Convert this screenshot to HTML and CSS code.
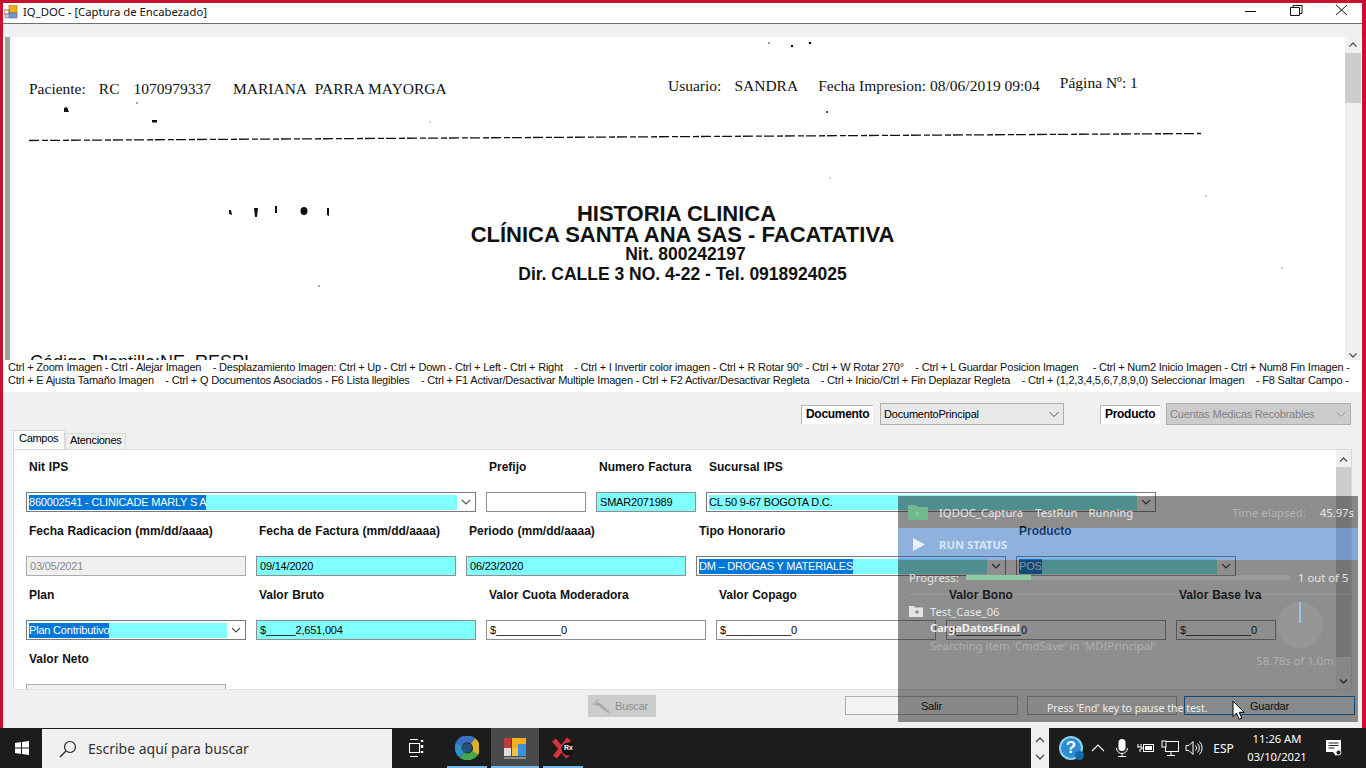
FILE: index.html
```html
<!DOCTYPE html>
<html lang="es">
<head>
    <meta charset="UTF-8">
    <meta name="viewport" content="width=device-width, initial-scale=1.0">
    <title>IQ_DOC - Captura de Encabezado</title>
    <link rel="stylesheet" href="styles.css">
</head>
<body>

    <div class="window">
        <div class="titlebar">
            <svg class="app-icon" width="14" height="14" viewBox="0 0 14 14">
                <rect x="5" y="0" width="8" height="8" fill="#e8b020" stroke="#a87810" stroke-width="0.6"/>
                <rect x="0" y="5" width="5" height="4" fill="#f4f4f4" stroke="#a04030" stroke-width="0.8"/>
                <rect x="5" y="8" width="8" height="5" fill="#6d9ad8" stroke="#4a6a9a" stroke-width="0.6"/>
                <rect x="1" y="9" width="4" height="4" fill="#c8c8d8" stroke="#7a7a8a" stroke-width="0.6"/>
            </svg>
            <span class="title-text">IQ_DOC - [Captura de Encabezado]</span>
            <div class="title-buttons">
                <svg width="44" height="20" viewBox="0 0 44 20"><path d="M14 11.500h11" stroke="#111" stroke-width="1"/></svg>
                <svg width="44" height="20" viewBox="0 0 44 20"><path d="M15.500 7.500h9v8h-9zM18 7V5.500h9v8h-2.500" fill="none" stroke="#111" stroke-width="1"/></svg>
                <svg width="44" height="20" viewBox="0 0 44 20"><path d="M17 5l11 10M28 5L17 15" stroke="#111" stroke-width="1"/></svg>
            </div>
        </div>
        <div class="strip"></div>

        <div class="viewer">
            <div class="left-bar"></div>
            <div class="scan">
                <svg class="specks" width="1335" height="323" viewBox="10 37 1335 323">
                    <g fill="#111">
                        <circle cx="769" cy="43" r="0.8"/><circle cx="792" cy="46" r="1.2"/><circle cx="810" cy="43" r="1.3"/>
                        <path d="M64 108l3-1 2 5-5 0z"/><circle cx="137" cy="103" r="0.7"/><rect x="152" y="120" width="5" height="2.5"/>
                        <circle cx="827" cy="112" r="1"/><circle cx="430" cy="122" r="0.5"/>
                        <path d="M229 210l2 0 1 5-3-1z"/><path d="M254 208l4 0-1 9-2 0z"/><path d="M275 206l2 0 0 7-2 0z"/>
                        <ellipse cx="304" cy="211" rx="3.5" ry="4"/><path d="M327 208l2 0 0 8-2-1z"/>
                        <circle cx="319" cy="286" r="0.7"/><circle cx="1206" cy="196" r="0.5"/><circle cx="1282" cy="268" r="0.5"/>
                        <circle cx="830" cy="178" r="0.5"/>
                    </g>
                </svg>
                <div class="scan-head">
                    <div class="scan-left">
                        <span>Paciente:</span><span class="sp-b">RC</span><span class="sp-c">1070979337</span><span class="sp-d">MARIANA&nbsp; PARRA MAYORGA</span>
                    </div>
                    <div class="scan-right">
                        <span>Usuario:</span><span class="sp-f">SANDRA</span><span class="sp-g">Fecha Impresion: 08/06/2019 09:04</span><span class="sp-h">Página Nº: 1</span>
                    </div>
                </div>
                <svg class="dash-line" width="1175" height="10" viewBox="0 0 1175 10">
                    <path d="M0 8.500L1172 1.500" stroke="#111" stroke-width="1.300" stroke-dasharray="10 3 6 2"/>
                </svg>
                <div class="scan-title">
                    <div class="t-big t-first">HISTORIA CLINICA</div>
                    <div class="t-big">CLÍNICA SANTA ANA SAS - FACATATIVA</div>
                    <div class="t-small t-nit">Nit. 800242197</div>
                    <div class="t-small t-last">Dir. CALLE 3 NO. 4-22 - Tel. 0918924025</div>
                </div>
                <div class="scan-code">Código Plantilla:NE_RESPI</div>
            </div>
            <div class="scroll-v">
                <svg class="chev" width="16" height="16" viewBox="0 0 16 16"><path d="M4.500 9.500L8 6l3.500 3.500" fill="none" stroke="#555" stroke-width="1.400"/></svg>
                <div class="thumb thumb-top"></div>
                <svg class="chev chev-end" width="16" height="16" viewBox="0 0 16 16"><path d="M4.500 6.500L8 10l3.500-3.500" fill="none" stroke="#555" stroke-width="1.400"/></svg>
            </div>
        </div>

        <div class="hints">
            <div class="hint-line">Ctrl + Zoom Imagen - Ctrl - Alejar Imagen    - Desplazamiento Imagen: Ctrl + Up - Ctrl + Down - Ctrl + Left - Ctrl + Right    - Ctrl + I Invertir color imagen - Ctrl + R Rotar 90° - Ctrl + W Rotar 270°    - Ctrl + L Guardar Posicion Imagen     - Ctrl + Num2 Inicio Imagen - Ctrl + Num8 Fin Imagen -</div>
            <div class="hint-line">Ctrl + E Ajusta Tamaño Imagen    - Ctrl + Q Documentos Asociados - F6 Lista llegibles    - Ctrl + F1 Activar/Desactivar Multiple Imagen - Ctrl + F2 Activar/Desactivar Regleta    - Ctrl + Inicio/Ctrl + Fin Deplazar Regleta    - Ctrl + (1,2,3,4,5,6,7,8,9,0) Seleccionar Imagen    - F8 Saltar Campo -</div>
        </div>

        <div class="panel">
            <div class="selectors">
                <div class="sel-label sel-doc">Documento</div>
                <div class="sel-box sel-box-doc">
                    <span>DocumentoPrincipal</span>
                    <svg width="12" height="12" viewBox="0 0 12 12"><path d="M1.500 4L6 8.500 10.500 4" fill="none" stroke="#555"/></svg>
                </div>
                <div class="sel-label sel-prod">Producto</div>
                <div class="sel-box sel-box-prod">
                    <span>Cuentas Medicas Recobrables</span>
                    <svg width="12" height="12" viewBox="0 0 12 12"><path d="M1.500 4L6 8.500 10.500 4" fill="none" stroke="#999"/></svg>
                </div>
            </div>

            <div class="tabs">
                <div class="tab tab-active">Campos</div>
                <div class="tab">Atenciones</div>
            </div>

            <div class="tab-panel">
                <div class="form">
                    <div class="row">
                        <div class="field w450">
                            <label>Nit IPS</label>
                            <div class="combo"><div class="combo-fill"><span class="sel-text">860002541 - CLINICADE MARLY S A</span></div>
                                <svg width="18" height="18" viewBox="0 0 18 18"><path d="M5 7l4 4 4-4" fill="none" stroke="#555" stroke-width="1.200"/></svg></div>
                        </div>
                        <div class="field w100">
                            <label>Prefijo</label>
                            <div class="input input-plain"></div>
                        </div>
                        <div class="field w100">
                            <label>Numero Factura</label>
                            <div class="input input-req">SMAR2071989</div>
                        </div>
                        <div class="field w450">
                            <label>Sucursal IPS</label>
                            <div class="combo"><div class="combo-fill">CL 50 9-67 BOGOTA D.C.</div>
                                <svg width="18" height="18" viewBox="0 0 18 18"><path d="M5 7l4 4 4-4" fill="none" stroke="#333" stroke-width="1.200"/></svg></div>
                        </div>
                    </div>
                    <div class="row">
                        <div class="field w220">
                            <label>Fecha Radicacion (mm/dd/aaaa)</label>
                            <div class="input input-off">03/05/2021</div>
                        </div>
                        <div class="field w200">
                            <label>Fecha de Factura (mm/dd/aaaa)</label>
                            <div class="input input-req">09/14/2020</div>
                        </div>
                        <div class="field w220">
                            <label>Periodo (mm/dd/aaaa)</label>
                            <div class="input input-req">06/23/2020</div>
                        </div>
                        <div class="field w310">
                            <label>Tipo Honorario</label>
                            <div class="combo"><div class="combo-fill"><span class="sel-text">DM – DROGAS Y MATERIALES</span></div>
                                <svg width="18" height="18" viewBox="0 0 18 18"><path d="M5 7l4 4 4-4" fill="none" stroke="#333" stroke-width="1.200"/></svg></div>
                        </div>
                        <div class="field w220">
                            <label>Producto</label>
                            <div class="combo"><div class="combo-fill"><span class="sel-text">POS</span></div>
                                <svg width="18" height="18" viewBox="0 0 18 18"><path d="M5 7l4 4 4-4" fill="none" stroke="#333" stroke-width="1.200"/></svg></div>
                        </div>
                    </div>
                    <div class="row">
                        <div class="field w220">
                            <label>Plan</label>
                            <div class="combo"><div class="combo-fill"><span class="sel-text">Plan Contributivo</span></div>
                                <svg width="18" height="18" viewBox="0 0 18 18"><path d="M5 7l4 4 4-4" fill="none" stroke="#555" stroke-width="1.200"/></svg></div>
                        </div>
                        <div class="field w220">
                            <label>Valor Bruto</label>
                            <div class="input input-req">$_____2,651,004</div>
                        </div>
                        <div class="field w220">
                            <label>Valor Cuota Moderadora</label>
                            <div class="input input-plain">$___________0</div>
                        </div>
                        <div class="field w220">
                            <label>Valor Copago</label>
                            <div class="input input-plain">$___________0</div>
                        </div>
                        <div class="field w220">
                            <label>Valor Bono</label>
                            <div class="input input-plain">$___________0</div>
                        </div>
                        <div class="field w100">
                            <label>Valor Base Iva</label>
                            <div class="input input-plain">$___________0</div>
                        </div>
                    </div>
                    <div class="row">
                        <div class="field w200">
                            <label>Valor Neto</label>
                            <div class="input input-off"></div>
                        </div>
                    </div>
                </div>
                <div class="scroll-form">
                    <svg class="chev" width="15" height="15" viewBox="0 0 15 15"><path d="M4 9.500L7.500 6 11 9.500" fill="none" stroke="#555" stroke-width="1.400"/></svg>
                    <div class="thumb thumb-form"></div>
                    <svg class="chev chev-end" width="15" height="16" viewBox="0 0 15 16"><path d="M4 6.500L7.500 10 11 6.500" fill="none" stroke="#333" stroke-width="1.400"/></svg>
                </div>
            </div>

            <div class="footer">
                <div class="btn btn-search">
                    <svg width="24" height="18" viewBox="0 0 24 18"><path d="M4 3l6 4 9 8-2 1-9-7-4-1z" fill="#a8a8a8"/><path d="M2 8l6-6" stroke="#b8b8b8" stroke-width="2"/></svg>
                    <span>Buscar</span>
                </div>
                <div class="btn btn-exit">Salir</div>
                <div class="btn btn-mid"></div>
                <div class="btn btn-save">Guardar</div>
            </div>
        </div>
    </div>

    <div class="taskbar">
        <div class="start">
            <svg width="14" height="14" viewBox="0 0 14 14"><path d="M0 2l6-.9V6.500H0zM7 1l7-1v6.500H7zM0 7.500h6v5.400L0 12zM7 7.500h7V14l-7-1z" fill="#fff"/></svg>
        </div>
        <div class="search">
            <svg width="20" height="20" viewBox="0 0 20 20"><circle cx="12" cy="8" r="5.500" fill="none" stroke="#222" stroke-width="1.200"/><path d="M8 12l-6 6" stroke="#222" stroke-width="1.300"/></svg>
            <span>Escribe aquí para buscar</span>
        </div>
        <div class="task-cell task-view">
            <svg width="17" height="18" viewBox="0 0 17 18" fill="none" stroke="#fff"><path d="M2 .5h8M2 17.500h8" /><rect x="1.500" y="4.500" width="10" height="9"/><path d="M14 1v2M14 6v3M14 12v2" stroke-width="2.500"/></svg>
        </div>
        <div class="task-cell app-open">
            <svg width="24" height="24" viewBox="0 0 24 24" fill="none" stroke-width="7">
                <circle cx="12" cy="12" r="5" fill="#27527a" stroke="none"/>
                <path d="M4 8a9 9 0 0 1 14-3" stroke="#3a6fc4"/><path d="M18 5a9 9 0 0 1 2 12" stroke="#d8b428"/><path d="M20 17a9 9 0 0 1-13 2" stroke="#43a84c"/><path d="M7 19a9 9 0 0 1-3-11" stroke="#2a8fc8"/>
            </svg>
        </div>
        <div class="task-cell app-open app-active">
            <svg width="24" height="24" viewBox="0 0 24 24">
                <rect x="1" y="2" width="7" height="10" fill="#c03a3a"/><rect x="1" y="12" width="7" height="8" fill="#ddd"/><rect x="9" y="2" width="14" height="10" fill="#f0b020"/><rect x="15" y="8" width="8" height="12" fill="#3f8fe0"/><rect x="9" y="12" width="6" height="8" fill="#f3c040"/><path d="M1 22h22" stroke="#ccc"/>
            </svg>
        </div>
        <div class="task-cell app-open">
            <svg width="26" height="24" viewBox="0 0 26 24"><path d="M4 4l14 17M19 3L5 21" stroke="#d8323a" stroke-width="5"/><circle cx="18" cy="13" r="6.500" fill="#111"/></svg>
            <span class="rx">Rx</span>
        </div>
        <div class="task-spacer"></div>
        <div class="bar-scroll">
            <svg width="12" height="9" viewBox="0 0 12 9"><path d="M2 6l4-4 4 4" fill="none" stroke="#444" stroke-width="1.300"/></svg>
            <svg width="12" height="9" viewBox="0 0 12 9"><path d="M2 3l4 4 4-4" fill="none" stroke="#444" stroke-width="1.300"/></svg>
        </div>
        <div class="tray">
            <div class="tray-help"><span class="help-mark">?</span><span class="help-badge"></span></div>
            <div class="tray-cell"><svg width="14" height="8" viewBox="0 0 14 8"><path d="M1 7l6-6 6 6" fill="none" stroke="#fff" stroke-width="1.100"/></svg></div>
            <div class="tray-cell"><svg width="14" height="20" viewBox="0 0 14 20"><rect x="3.500" y="1" width="7" height="12" rx="3.500" fill="#fff"/><path d="M1.500 10a5.500 5.500 0 0 0 11 0M7 15.500V18M3 18.500h8" fill="none" stroke="#fff"/></svg></div>
            <div class="tray-cell"><svg width="18" height="14" viewBox="0 0 18 14" fill="none" stroke="#fff"><path d="M1 3v3M4 3v3M0 6h5v2H3v3" /><rect x="6.500" y="3.500" width="10" height="7"/><rect x="8" y="5" width="7" height="4" fill="#fff" stroke="none"/></svg></div>
            <div class="tray-cell"><svg width="18" height="17" viewBox="0 0 18 17" fill="none" stroke="#fff"><rect x="4.500" y="1.500" width="13" height="10"/><path d="M10 12v3M6 15.500h8"/><rect x="1" y="1" width="4" height="6" fill="#1c1c1c"/></svg></div>
            <div class="tray-cell"><svg width="18" height="16" viewBox="0 0 18 16" fill="none" stroke="#fff"><path d="M1 5.500h3l4-4v13l-4-4H1z"/><path d="M10.500 5.500a3.500 3.500 0 0 1 0 5M12.500 3.500a6.500 6.500 0 0 1 0 9M14.500 1.500a9.500 9.500 0 0 1 0 13"/></svg></div>
            <div class="tray-lang">ESP</div>
            <div class="tray-clock"><div>11:26 AM</div><div>03/10/2021</div></div>
            <div class="tray-note"><svg width="17" height="18" viewBox="0 0 17 18"><path d="M1 1h15v10l-3 3-2 3-3-4H1z" fill="#fff"/><path d="M3.500 4h10M3.500 6.500h10M3.500 9h6" stroke="#1c1c1c"/><circle cx="13.500" cy="13.500" r="2.500" fill="#1c1c1c" stroke="#fff"/></svg></div>
        </div>
    </div>

    <!-- panel de la herramienta de pruebas, queda encima del formulario -->
    <div class="runner">
        <div class="runner-head">
            <svg width="20" height="16" viewBox="0 0 20 16"><path d="M0 1h8l2 2h10v13H0z" fill="#6fb98c"/><path d="M8 7l4 2.500L8 12z" fill="#8ccba4"/></svg>
            <span class="rh-a">IQDOC_Captura</span><span class="rh-b">TestRun</span><span class="rh-c">Running</span>
            <span class="rh-time">Time elapsed:</span><span class="rh-val">45.97s</span>
        </div>
        <div class="runner-band">
            <svg width="12" height="13" viewBox="0 0 12 13"><path d="M0 0l12 6.500L0 13z" fill="#e8f0fa"/></svg>
            <span>RUN STATUS</span>
        </div>
        <div class="runner-body">
            <div class="progress">
                <span class="progress-label">Progress:</span>
                <div class="progress-track"><div class="progress-fill"></div></div>
                <span class="progress-count">1 out of 5</span>
            </div>
            <div class="runner-info">
                <div class="info-left">
                    <div class="case-line">
                        <svg width="14" height="12" viewBox="0 0 14 12"><path d="M0 1h5l1 1.500h8V12H0z" fill="#e4e4e4"/><circle cx="8" cy="7" r="1.800" fill="#8a8a8a"/></svg>
                        <span>Test_Case_06</span>
                    </div>
                    <div class="step-name">CargaDatosFinal</div>
                    <div class="step-detail">Searching item 'CmdSave' in 'MDIPrincipal'</div>
                </div>
                <div class="info-right">
                    <div class="dial"><div class="dial-tick"></div></div>
                    <div class="dial-text">58.78s of 1.0m</div>
                </div>
            </div>
        </div>
        <div class="runner-foot">Press 'End' key to pause the test.</div>
    </div>

    <svg class="pointer" width="14" height="21" viewBox="0 0 14 21"><path d="M1 1v15.500l3.600-3.300 2.600 6 2.600-1.100-2.600-5.800h5z" fill="#fff" stroke="#000"/></svg>

</body>
</html>
```

FILE: styles.css
```css
* {
    box-sizing: border-box;
}

body {
    margin: 0;
    height: 768px;
    width: 1366px;
    overflow: hidden;
    position: relative;
    display: flex;
    flex-direction: column;
    background-color: #c8102e;
    font-family: "Liberation Sans", Arial, sans-serif;
    font-size: 11px;
    letter-spacing: -0.2px;
    color: #000;
}

.window {
    height: 725px;
    margin: 3px 4px 0 3px;
    display: flex;
    flex-direction: column;
    background-color: #f0f0f0;
}

/* barra de titulo */
.titlebar {
    height: 21px;
    flex-shrink: 0;
    display: flex;
    align-items: center;
    background-color: #fff;
    border-bottom: 1px solid #6e6e6e;
    padding: 0 0 3px 1px;
}

.title-text {
    margin-left: 5px;
    font-family: "Noto Sans", sans-serif;
    font-size: 11.300px;
    letter-spacing: 0;
    color: #111;
}

.title-buttons {
    align-self: flex-start;
    margin: -3px -1px 0 auto;
    display: flex;
}

.strip {
    height: 13px;
    flex-shrink: 0;
    background-color: #f0f0f0;
}

/* imagen escaneada */
.viewer {
    height: 323px;
    flex-shrink: 0;
    display: flex;
    background-color: #fff;
    padding-left: 2px;
}

.left-bar {
    width: 5px;
    background-color: #9aa59c;
}

.scan {
    position: relative;
    width: 1335px;
    overflow: hidden;
    background-color: #fff;
}

.specks {
    position: absolute;
    top: 0;
    left: 0;
}

.scan-head {
    display: flex;
    padding: 36px 0 0 19px;
    font-family: "Liberation Serif", serif;
    font-size: 15.500px;
    letter-spacing: 0;
    color: #111;
    height: 62px;
}

.scan-left {
    width: 639px;
    padding-top: 7px;
    white-space: nowrap;
}

.scan-right {
    white-space: nowrap;
    padding-top: 4px;
}

.sp-b { margin-left: 13px; }
.sp-c { margin-left: 14px; }
.sp-d { margin-left: 22px; }
.sp-f { margin-left: 13px; }
.sp-g { margin-left: 20px; }
.sp-h { margin-left: 20px; position: relative; top: -3px; }

.dash-line {
    display: block;
    margin: 33px 0 0 19px;
}

.scan-title {
    margin-top: 61px;
    padding-left: 10px;
    text-align: center;
    font-weight: bold;
    letter-spacing: 0;
    color: #111;
}

.t-big {
    font-size: 22px;
    line-height: 21px;
}

.t-first {
    padding-right: 12px;
}

.t-small {
    font-size: 17.500px;
    line-height: 19px;
}

.t-nit {
    padding-left: 6px;
}

.t-last {
    margin-top: 1px;
}

.scan-code {
    position: absolute;
    top: 315px;
    left: 20px;
    font-size: 18px;
    letter-spacing: 0;
    color: #111;
}

.scroll-v {
    width: 16px;
    display: flex;
    flex-direction: column;
    background-color: #f0f0f0;
}

.chev {
    display: block;
    flex-shrink: 0;
}

.chev-end {
    margin-top: auto;
}

.scroll-v .chev-end {
    margin-bottom: -3px;
}

.thumb {
    background-color: #cdcdcd;
}

.thumb-top {
    height: 50px;
}

.hints {
    height: 32px;
    flex-shrink: 0;
    padding: 1px 0 0 5px;
    background-color: #fff;
    font-size: 11px;
    letter-spacing: -0.2px;
    line-height: 13px;
    color: #111;
}

.hint-line {
    white-space: pre;
}

/* panel inferior */
.panel {
    flex: 1;
    display: flex;
    flex-direction: column;
    min-height: 0;
}

.selectors {
    display: flex;
    justify-content: flex-end;
    align-items: center;
    height: 22px;
    margin-top: 11px;
    padding-right: 11px;
    flex-shrink: 0;
}

.sel-label {
    height: 19px;
    line-height: 17px;
    padding-left: 4px;
    font-size: 12px;
    font-weight: bold;
    letter-spacing: -0.3px;
    background-color: #fff;
    border-top: 1px solid #b5b5b5;
    border-left: 1px solid #b5b5b5;
}

.sel-doc {
    width: 72px;
    margin-right: 7px;
}

.sel-prod {
    width: 60px;
    margin-right: 6px;
    margin-left: 36px;
}

.sel-box {
    height: 22px;
    display: flex;
    align-items: center;
    justify-content: space-between;
    padding: 0 3px;
    border: 1px solid #adadad;
    background-color: #e8e8e8;
}

.sel-box-doc {
    width: 184px;
}

.sel-box-prod {
    width: 185px;
    background-color: #ccc;
    color: #838383;
}

.tabs {
    display: flex;
    align-items: flex-end;
    height: 19px;
    margin: 5px 0 0 10px;
    flex-shrink: 0;
}

.tab {
    height: 16px;
    line-height: 13px;
    padding: 0 4px;
    border: 1px solid #d9d9d9;
    border-bottom: none;
    background-color: #f0f0f0;
    letter-spacing: -0.3px;
}

.tab-active {
    height: 19px;
    width: 52px;
    line-height: 15px;
    padding-left: 5px;
    background-color: #fff;
}

.tab-panel {
    height: 241px;
    margin: 0 10px;
    display: flex;
    flex-shrink: 0;
    background-color: #fff;
    border: 1px solid #d9d9d9;
    border-bottom: 1px solid #e3e3e3;
}

.form {
    flex: 1;
    min-width: 0;
    overflow: hidden;
    padding: 10px 0 0 12px;
}

.row {
    display: flex;
    gap: 10px;
    margin-bottom: 12px;
}

.field {
    flex-shrink: 0;
}

.field label {
    display: block;
    height: 14px;
    line-height: 14px;
    margin-bottom: 18px;
    padding-left: 3px;
    font-size: 12px;
    font-weight: bold;
    letter-spacing: 0;
    word-spacing: 0.5px;
    white-space: nowrap;
    color: #111;
}

.w100 { width: 100px; }
.w200 { width: 200px; }
.w220 { width: 220px; }
.w310 { width: 310px; }
.w450 { width: 450px; }

.input {
    height: 20px;
    line-height: 18px;
    padding-left: 3px;
    border: 1px solid #8f8f8f;
    white-space: nowrap;
    overflow: hidden;
}

.input-plain {
    background-color: #fff;
}

.input-req {
    background-color: #80ffff;
}

.input-off {
    background-color: #f0f0f0;
    color: #8a8a8a;
    border-color: #ababab;
}

.combo {
    height: 20px;
    display: flex;
    align-items: center;
    padding-left: 2px;
    border: 1px solid #7a7a7a;
    background-color: #fff;
}

.combo-fill {
    flex: 1;
    min-width: 0;
    height: 15px;
    line-height: 15px;
    background-color: #80ffff;
    white-space: nowrap;
    overflow: hidden;
}

.combo svg {
    flex-shrink: 0;
}

.sel-text {
    display: inline-block;
    background-color: #0078d7;
    color: #fff;
}

.scroll-form {
    width: 15px;
    display: flex;
    flex-direction: column;
    flex-shrink: 0;
    background-color: #f0f0f0;
    padding-top: 2px;
}

.thumb-form {
    height: 190px;
}

.footer {
    display: flex;
    align-items: flex-start;
    padding: 5px 0 0 585px;
    flex: 1;
}

.btn {
    height: 19px;
    margin-top: 1px;
    text-align: center;
    line-height: 18px;
    border: 1px solid #adadad;
    background-color: #f3f3f3;
}

.btn-search {
    width: 68px;
    height: 22px;
    margin-top: 0;
    display: flex;
    align-items: center;
    padding-left: 2px;
    background-color: #ccc;
    border-color: #ccc;
    color: #8c8c8c;
}

.btn-exit {
    width: 173px;
    margin-left: 189px;
}

.btn-mid {
    width: 150px;
    margin-left: 9px;
}

.btn-save {
    width: 171px;
    margin-left: 7px;
    border-color: #0078d7;
    background-color: #eef6fc;
}

/* barra de tareas */
.taskbar {
    height: 40px;
    flex-shrink: 0;
    display: flex;
    align-items: center;
    background-color: #1c1c1c;
    color: #fff;
    letter-spacing: 0;
}

.start {
    width: 42px;
    height: 40px;
    display: flex;
    align-items: center;
    padding-left: 15px;
}

.search {
    width: 350px;
    height: 39px;
    margin-top: 1px;
    display: flex;
    align-items: center;
    padding-left: 16px;
    background-color: #f0f0f0;
    font-family: "Noto Sans", sans-serif;
    font-size: 14px;
    color: #333;
}

.search span {
    margin-left: 10px;
}

.task-cell {
    position: relative;
    width: 48px;
    height: 40px;
    display: flex;
    align-items: center;
    justify-content: center;
}

.task-view {
    width: 51px;
    padding-right: 3px;
}

.app-open::after {
    content: "";
    position: absolute;
    left: 4px;
    right: 4px;
    bottom: 0;
    height: 2px;
    background-color: #76b9ed;
}

.app-active {
    background-color: #4a4a4a;
}

.app-active::after {
    left: 0;
    right: 0;
}

.rx {
    position: absolute;
    left: 25px;
    top: 16px;
    font-size: 7px;
    font-weight: bold;
}

.task-spacer {
    flex: 1;
}

.bar-scroll {
    width: 18px;
    height: 40px;
    margin-right: 10px;
    display: flex;
    flex-direction: column;
    align-items: center;
    justify-content: center;
    gap: 7px;
    background-color: #f0f0f0;
}

.tray {
    display: flex;
    align-items: center;
    height: 40px;
}

.tray-help {
    position: relative;
    width: 24px;
    height: 24px;
    margin-right: 3px;
    border-radius: 50%;
    background-color: #2a8fd0;
    border: 2px solid #8fd0ef;
    text-align: center;
}

.help-mark {
    font-size: 17px;
    font-weight: bold;
    line-height: 20px;
    color: #fff;
}

.help-badge {
    position: absolute;
    right: -3px;
    bottom: -2px;
    width: 9px;
    height: 9px;
    border-radius: 50%;
    background-color: #1668a8;
}

.tray-cell {
    width: 24px;
    height: 40px;
    display: flex;
    align-items: center;
    justify-content: center;
}

.tray-lang {
    width: 33px;
    margin-left: 1px;
    text-align: center;
    font-family: "Noto Sans", sans-serif;
    font-size: 12px;
}

.tray-clock {
    width: 70px;
    margin-left: 2px;
    text-align: center;
    font-family: "Noto Sans", sans-serif;
    font-size: 11.200px;
    line-height: 18px;
}

.tray-note {
    width: 54px;
    display: flex;
    justify-content: center;
    padding-right: 12px;
}

/* panel de pruebas */
.runner {
    position: absolute;
    left: 898px;
    top: 496px;
    width: 460px;
    height: 226px;
    display: flex;
    flex-direction: column;
    font-family: "Noto Sans", sans-serif;
    font-size: 11.300px;
    letter-spacing: 0;
    color: #e6e6e6;
}

.runner-head {
    height: 32px;
    display: flex;
    align-items: center;
    padding: 0 4px 0 10px;
    background-color: rgba(30, 30, 30, 0.5);
}

.rh-a { margin-left: 11px; }
.rh-b { margin-left: 12px; }
.rh-c { margin-left: 11px; }
.rh-time { margin-left: auto; color: #b4b4b4; }
.rh-val { margin-left: 14px; }

.runner-band {
    height: 32px;
    display: flex;
    align-items: center;
    padding-left: 15px;
    background-color: rgba(30, 100, 190, 0.5);
    font-weight: bold;
    color: #d8e6f6;
}

.runner-band span {
    margin-left: 14px;
}

.runner-body {
    height: 130px;
    padding: 8px 8px 0 11px;
    background-color: rgba(30, 30, 30, 0.5);
}

.progress {
    display: flex;
    align-items: center;
    height: 18px;
    padding-bottom: 8px;
    box-sizing: content-box;
    border-bottom: 1px solid rgba(255, 255, 255, 0.12);
}

.progress-label {
    width: 57px;
}

.progress-track {
    width: 324px;
    height: 5px;
    border-radius: 3px;
    background-color: rgba(255, 255, 255, 0.12);
}

.progress-fill {
    width: 65px;
    height: 5px;
    background-color: #8ccba4;
}

.progress-count {
    margin-left: 8px;
    white-space: nowrap;
}

.runner-info {
    display: flex;
    justify-content: space-between;
    padding-top: 7px;
}

.case-line {
    display: flex;
    align-items: center;
    gap: 7px;
    height: 18px;
}

.step-name {
    margin: 0 0 0 21px;
    height: 18px;
    font-weight: bold;
    letter-spacing: -0.2px;
    color: #f0f0f0;
}

.step-detail {
    margin: 0 0 0 21px;
    color: #b0b0b0;
}

.info-right {
    width: 80px;
    margin-right: 15px;
    display: flex;
    flex-direction: column;
    align-items: center;
}

.dial {
    position: relative;
    width: 46px;
    height: 46px;
    margin-left: 10px;
    border-radius: 50%;
    background-color: rgba(255, 255, 255, 0.08);
}

.dial-tick {
    position: absolute;
    left: 22px;
    top: 0;
    width: 2px;
    height: 21px;
    background-color: #9fc2dc;
}

.dial-text {
    margin-top: 5px;
    white-space: nowrap;
    color: #b0b0b0;
}

.runner-foot {
    height: 32px;
    padding: 11px 0 0 149px;
    background-color: rgba(30, 30, 30, 0.5);
    color: #eee;
    font-size: 10.500px;
}

.pointer {
    position: absolute;
    left: 1232px;
    top: 700px;
}
```
